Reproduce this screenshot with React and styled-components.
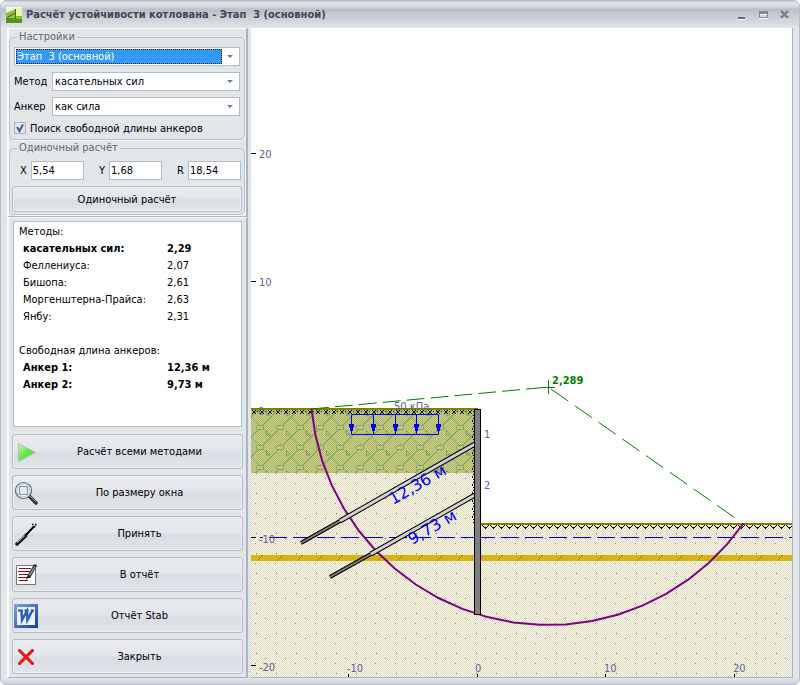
import React, { useState } from 'react'
import styled, { createGlobalStyle } from 'styled-components'

const GlobalStyle = createGlobalStyle`
  * {
    box-sizing: border-box;
  }

  body {
    margin: 0;
    background: #fff;
    color: #000;
    font-family: 'DejaVu Sans Condensed', 'DejaVu Sans', sans-serif;
    font-size: 11px;
    line-height: 17px;
  }

  button, input, select {
    font: inherit;
    color: inherit;
  }
`

const Window = styled.div`
  display: flex;
  flex-direction: column;
  min-height: 100vh;
  border: 1px solid #b6bdc9;
  border-radius: 6px;
  background: #e2e6e9;
  overflow: hidden;
`

const TitleBar = styled.header`
  display: flex;
  align-items: center;
  height: 27px;
  padding: 0 6px 0 5px;
  background: linear-gradient(#c4cad2 0, #e3e5e8 2px, #cdd0d6 7px, #b9bdc7 8px, #ccd0d6 17px, #e2e6e9 27px);
`

const Title = styled.h1`
  flex: 1;
  margin: 0 0 0 4px;
  color: #3f4858;
  font-size: 11px;
  font-weight: 700;
  white-space: nowrap;
`

const Controls = styled.div`
  display: flex;
  gap: 8px;
`

const ControlButton = styled.button`
  display: flex;
  width: 14px;
  height: 14px;
  padding: 0;
  border: 0;
  background: none;
`

const Body = styled.div`
  display: flex;
  flex: 1;
  padding: 0 6px 0 6px;
`

const Sidebar = styled.aside`
  display: flex;
  flex-direction: column;
  flex: 0 0 241px;
`

const Panel = styled.section`
  display: flex;
  flex-direction: column;
  flex: ${({ $grow }) => ($grow ? 1 : 'none')};
  border: solid;
  border-width: 1px 2px 1px 2px;
  border-color: #fafbfb #a9b5bf #a9b5bf #fafbfb;
  padding: ${({ $grow }) => ($grow ? '3px' : '0 1px 1px 0')};
`

const Group = styled.fieldset`
  display: flex;
  flex-direction: column;
  gap: 6px;
  min-width: 0;
  margin: 0;
  padding: ${({ $tight }) => ($tight ? '5px 2px 2px 2px' : '2px 2px 5px 2px')};
  border: 1px solid #b9c1c9;
  border-radius: 5px;
  box-shadow: 1px 1px 0 #f6f7f8;
`

const Legend = styled.legend`
  margin-left: 5px;
  padding: 0 2px;
  color: #5b6a78;
  line-height: 16px;
`

const Field = styled.div`
  display: flex;
  align-items: center;
  padding: 0 2px;

  label {
    flex: 0 0 38px;
  }
`

const SelectBox = styled.div`
  display: flex;
  flex: 1;
  align-items: center;
  height: 19px;
  padding: 1px;
  border: 1px solid #b3bccb;
  background: #fff;
`

const Select = styled.select`
  flex: 1;
  min-width: 0;
  height: 15px;
  padding: 0 1px;
  border: 0;
  appearance: none;
  line-height: 15px;
  background: ${({ $active }) => ($active ? '#3399ff' : '#fff')};
  color: ${({ $active }) => ($active ? '#fff' : '#000')};
  outline: ${({ $active }) => ($active ? '1px dotted #1c1c1c' : 'none')};
  outline-offset: -1px;
`

const CheckLabel = styled.label`
  display: flex;
  align-items: center;
  gap: 4px;
  height: 12px;
  padding: 0 2px;

  input {
    appearance: none;
    width: 12px;
    height: 12px;
    margin: 0;
    border: 1px solid #a3b4cc;
    background: #dfe8f1;
  }
`

const CheckMark = styled.svg`
  margin-left: -16px;
  pointer-events: none;
`

const Coords = styled.div`
  display: flex;
  justify-content: space-between;
  padding: 0 1px 0 8px;

  label {
    display: flex;
    align-items: center;
    gap: 4px;
  }

  input {
    width: 53px;
    height: 19px;
    padding: 0 1px;
    border: 1px solid #b3bccb;
    background: #fff;
  }
`

const Button = styled.button`
  display: flex;
  align-items: center;
  width: 100%;
  height: ${({ $small }) => ($small ? '26px' : '35px')};
  padding: 0 1px;
  border: 1px solid #b5bcc6;
  border-radius: 3px;
  background: linear-gradient(#e9ebef, #e3e6eb 45%, #d9dde4 55%, #e1e4e9);
  box-shadow: inset 0 0 0 1px #eceef1;

  span {
    flex: 1;
    text-align: center;
  }
`

const Output = styled.div`
  flex: 1;
  margin: 0 1px 3px 1px;
  padding: 1px 5px 0 5px;
  border: 1px solid #b3bccb;
  background: #fff;
`

const Results = styled.table`
  margin-bottom: 17px;
  border-collapse: collapse;
  table-layout: fixed;

  caption {
    text-align: left;
    white-space: nowrap;
  }

  th, td {
    padding: 0 0 0 4px;
    height: 17px;
    text-align: left;
    font-weight: 400;
  }

  th {
    width: 144px;
  }
`

const ResultRow = styled.tr`
  && > * {
    font-weight: ${({ $bold }) => ($bold ? 700 : 400)};
  }
`

const Actions = styled.div`
  display: flex;
  flex-direction: column;
  gap: 6px;
  margin-top: 4px;
`

const Plot = styled.main`
  flex: 1;
  min-width: 0;
  margin-left: 3px;
  border-right: 1px solid #a9b5bf;
  border-bottom: 1px solid #a9b5bf;
  background: #fff;

  svg {
    display: block;
    width: 100%;
    height: 100%;
  }

  text {
    font-size: 11px;
    fill: #5a6396;
  }
`

const RodLabel = styled.text`
  && {
    fill: #00f;
    font-family: 'DejaVu Sans', sans-serif;
    font-size: 16px;
  }
`

const CenterLabel = styled.text`
  && {
    fill: #008000;
    font-weight: 700;
  }
`

const Footer = styled.footer`
  height: 6px;
  background: linear-gradient(#e2e6e9, #ccd2dc);
`

const Arrow = () => (
  <svg width="16" height="15" viewBox="0 0 16 15" aria-hidden="true">
    <path d="M5 6h6L8 9z" fill="#707c8a" />
  </svg>
)

const AppIcon = () => (
  <svg width="16" height="16" viewBox="0 0 16 16" aria-hidden="true">
    <path d="M0 0h16v10H0z" fill="#f2f6ea" />
    <path d="M0 6l10-4v7h6v7H0z" fill="#8dc63a" />
    <path d="M0 11h16v5H0z" fill="#5a9417" />
    <path d="M10 1h6v8h-6z" fill="#e3f5a5" />
    <path d="M9.500 2v9M1 10.500l9-5" stroke="#4c5a3e" fill="none" />
    <path d="M10 9h6v3h-6z" fill="#86bb34" />
  </svg>
)

const PlayIcon = () => (
  <svg width="24" height="24" viewBox="0 0 24 24" aria-hidden="true">
    <defs>
      <linearGradient id="play" x1="0" y1="0" x2="1" y2="1">
        <stop offset="0" stopColor="#c4f9b4" />
        <stop offset=".5" stopColor="#62e83c" />
        <stop offset="1" stopColor="#58dc34" />
      </linearGradient>
    </defs>
    <path d="M4.500 3.500v18l17-9z" fill="url(#play)" stroke="#b4bdb4" />
  </svg>
)

const ZoomIcon = () => (
  <svg width="24" height="24" viewBox="0 0 24 24" aria-hidden="true">
    <path d="M15 15l7 7" stroke="#333" strokeWidth="3.500" strokeLinecap="round" />
    <path d="M16 15l6 6" stroke="#999" strokeWidth="1" />
    <circle cx="9.500" cy="9.500" r="8" fill="#f4f9fc" stroke="#59666b" strokeWidth="1.200" />
    <circle cx="9.500" cy="9.500" r="6.500" fill="none" stroke="#c3d4dc" strokeWidth="1.500" />
    <rect x="5.500" y="5.500" width="8" height="8" rx="1" fill="#e8eff3" stroke="#87959c" strokeWidth="1.200" />
  </svg>
)

const PenIcon = () => (
  <svg width="24" height="24" viewBox="0 0 24 24" aria-hidden="true">
    <path d="M3 22L12.500 13" stroke="#1b1b1b" strokeWidth="3.500" strokeLinecap="round" />
    <path d="M3 20.500l7.500-7" stroke="#a8a8a8" strokeWidth="1.500" />
    <path d="M12 13l8-8.500" stroke="#000" strokeWidth="2" />
    <path d="M18 2.500h1.500M21 2.500h1.500M20 4.500h1.500" stroke="#000" strokeWidth="1.500" />
    <path d="M13 14.500l8-8.500" stroke="#fff" strokeWidth="1" />
  </svg>
)

const ReportIcon = () => (
  <svg width="24" height="24" viewBox="0 0 24 24" aria-hidden="true">
    <path d="M2.500 2.500h19v19h-19z" fill="#fff" stroke="#777" />
    <path d="M5 5.500h12M4 8.500h12M5 11.500h9M4 14.500h9M5 17.500h9" stroke="#8b0f1d" />
    <path d="M15 13.500l6-10.500" stroke="#222" strokeWidth="3.500" strokeLinecap="round" />
    <path d="M15.500 12.500l5.500-9" stroke="#8d9895" strokeWidth="1.500" />
    <path d="M11.500 16.500l5-2.500-3-1.500z" fill="#333" />
  </svg>
)

const WordIcon = () => (
  <svg width="24" height="24" viewBox="0 0 24 24" aria-hidden="true">
    <defs>
      <linearGradient id="word" x1="0" y1="0" x2="1" y2="1">
        <stop offset="0" stopColor="#7ba5ee" />
        <stop offset="1" stopColor="#173b94" />
      </linearGradient>
    </defs>
    <rect width="24" height="24" fill="url(#word)" />
    <rect x="3" y="3" width="18" height="18" fill="#eef4fe" />
    <path d="M4 6.500h5M10.500 6.500h4M17 6.500h3" stroke="#1e489f" strokeWidth="2" />
    <path d="M7.500 6l.5 10L13 7l.5 9L18.500 6" fill="none" stroke="#2f60bd" strokeWidth="2.500" />
  </svg>
)

const CloseIcon = () => (
  <svg width="24" height="24" viewBox="0 0 24 24" aria-hidden="true">
    <path d="M5.500 5.500l13 13M18.500 5.500l-13 13" stroke="#c90808" strokeWidth="3" strokeLinecap="round" />
    <path d="M5.500 5.500l13 13M18.500 5.500l-13 13" stroke="#fa1414" strokeWidth="2" strokeLinecap="round" />
  </svg>
)

const methods = [
  ['касательных сил:', '2,29', true],
  ['Феллениуса:', '2,07'],
  ['Бишопа:', '2,61'],
  ['Моргенштерна-Прайса:', '2,63'],
  ['Янбу:', '2,31'],
]

const anchors = [
  ['Анкер 1:', '12,36 м', true],
  ['Анкер 2:', '9,73 м', true],
]

const actions = [
  ['Расчёт всеми методами', PlayIcon],
  ['По размеру окна', ZoomIcon],
  ['Принять', PenIcon],
  ['В отчёт', ReportIcon],
  ['Отчёт Stab', WordIcon],
  ['Закрыть', CloseIcon],
]

/* slip circle, walked from the ground surface to the pit floor */
const circle = { x: 548.5, y: 387, r: 238, start: 174.7, end: 35, steps: 22 }

const slipLine = Array.from({ length: circle.steps + 1 }, (_, i) => {
  const deg = circle.start + ((circle.end - circle.start) * i) / circle.steps
  const a = (deg * Math.PI) / 180
  return `${(circle.x + circle.r * Math.cos(a)).toFixed(1)},${(circle.y + circle.r * Math.sin(a)).toFixed(1)}`
}).join(' ')

const ResultTable = ({ caption, rows }) => (
  <Results>
    <caption>{caption}</caption>
    <tbody>
      {rows.map(([name, value, bold]) => (
        <ResultRow key={name} $bold={bold}>
          <th scope="row">{name}</th>
          <td>{value}</td>
        </ResultRow>
      ))}
    </tbody>
  </Results>
)

const Dropdown = ({ id, label, value, active }) => (
  <Field>
    {label && <label htmlFor={id}>{label}</label>}
    <SelectBox>
      <Select id={id} $active={active} aria-label={label ? undefined : 'Этап'}>
        <option>{value}</option>
      </Select>
      <Arrow />
    </SelectBox>
  </Field>
)

/* anchor rod: light free length first, dark fixed part at the far end */
const Rod = ({ from, mid, to }) => (
  <g>
    <path d={`M${from}L${mid}`} stroke="#000" strokeWidth="5" />
    <path d={`M${mid}L${to}`} stroke="#000" strokeWidth="4" />
    <path d={`M${from}L${mid}`} stroke="#d0d0d0" strokeWidth="3" />
    <path d={`M${mid}L${to}`} stroke="#808080" strokeWidth="2" />
  </g>
)

const Section = () => (
  <svg viewBox="251 28 541 649" preserveAspectRatio="xMidYMid meet" role="img" aria-label="Разрез котлована">
    <defs>
      <pattern id="sandBase" width="2" height="2" patternUnits="userSpaceOnUse">
        <path d="M0 0h2v2H0z" fill="#faf8f2" />
        <path d="M0 0h1v1H0zM1 1h1v1H1z" fill="#dedab8" />
      </pattern>
      <pattern id="sandDots" x="251" y="540" width="20" height="20" patternUnits="userSpaceOnUse">
        <path d="M4 3h1v1H4zM5 13h1v1H5zM14 18h1v1h-1z" fill="#85857a" />
      </pattern>
      <pattern id="clayBase" width="2" height="2" patternUnits="userSpaceOnUse">
        <path d="M0 0h2v2H0z" fill="#cacc8a" />
        <path d="M0 0h1v1H0zM1 1h1v1H1z" fill="#b0b86a" />
      </pattern>
      <pattern id="clayMarks" x="251" y="417" width="40" height="20" patternUnits="userSpaceOnUse">
        <g fill="none" stroke="#78a45e">
          <path d="M0 20L20 0M20 20L40 0M0 0l20 20" />
          <rect x="5.500" y="8.500" width="7" height="4" rx="1" fill="#c4c486" />
          <rect x="25.500" y="8.500" width="7" height="4" rx="1" fill="#c4c486" />
          <path d="M15.500 13.500v5l4-1zM35.500 13.500v5l4-1z" />
        </g>
      </pattern>
      <pattern id="band" x="251" y="555" width="20" height="6" patternUnits="userSpaceOnUse">
        <path d="M0 0h20v6H0z" fill="#d9b40c" />
        <path d="M6 6l6-6" stroke="#a88a00" />
      </pattern>
      <pattern id="turf" x="252" y="410" width="8" height="4" patternUnits="userSpaceOnUse">
        <path d="M0 0h1v1H0zM3 0h1v1H3zM1 1h2v2H1zM0 3h1v1H0zM3 3h1v1H3zM5 1h1v1H5z" />
      </pattern>
      <pattern id="pitTurf" x="481" y="525" width="8" height="4" patternUnits="userSpaceOnUse">
        <path d="M1 0h1v1H1zM2 1h1v1H2zM3 2h3v1H3zM4 3h1v1H4zM6 1h1v1H6zM7 0h1v1H7z" />
      </pattern>
      <pattern id="wallTurf" x="471" y="410" width="3" height="8" patternUnits="userSpaceOnUse">
        <path d="M2 0h1v1H2zM1 2h1v2H1zM2 5h1v1H2z" />
      </pattern>
    </defs>

    <g shapeRendering="crispEdges">
      <path d="M251 473h223v50h318v154H251z" fill="url(#sandBase)" />
      <path d="M251 473h223v50h318v154H251z" fill="url(#sandDots)" />
      <path d="M251 410h223v63H251z" fill="url(#clayBase)" />
    </g>
    <path d="M251 410h223v63H251z" fill="url(#clayMarks)" />
    <path d="M251 555h541v6H251z" fill="url(#band)" />
    <path d="M260 537.500h214" stroke="#0000d0" strokeDasharray="18 6" strokeDashoffset="15" />
    <path d="M481 537.500h311" stroke="#0000d0" strokeDasharray="18 6" strokeDashoffset="4" />

    <g shapeRendering="crispEdges">
      <path d="M251 408h227v2H251zM481 523h311v2H481z" fill="#808000" />
      <path d="M251 410h223v4H251z" fill="url(#turf)" />
      <path d="M481 525h311v4H481z" fill="url(#pitTurf)" />
      <path d="M471 414h3v109h-3z" fill="url(#wallTurf)" />
    </g>

    <path d="M311 409L549 387" stroke="#008000" strokeDasharray="18 6" />
    <path d="M551 389L738 520" stroke="#008000" strokeDasharray="21 8" />
    <path d="M541 387.500h14M548.500 380v14" stroke="#008000" />

    <polyline points={slipLine} fill="none" stroke="#800080" strokeWidth="2" />

    <Rod from="475 444" mid="340 521" to="301 543" />
    <Rod from="475 495" mid="371 554" to="330 577" />
    <rect x="474.500" y="409.500" width="6" height="205" fill="#808080" stroke="#000" />

    <g stroke="#00f" fill="none">
      <path d="M351.500 414.500h87v20h-87zM373.500 414v20M395.500 414v20M416.500 414v20" />
      {[351, 373, 395, 416, 438].map(x => (
        <path key={x} d={`M${x - 2} 424h5v3l-1 1v3h-3v-3l-1-1z`} fill="#00f" stroke="none" />
      ))}
    </g>

    <path d="M251 153.500h5M251 281.500h5M251 537.500h5M251 665.500h5M348.500 674v3M477.500 674v3M605.500 674v3M734.500 674v3" stroke="#000" />

    <text x="259" y="158">20</text>
    <text x="259" y="286">10</text>
    <text x="258" y="415">0</text>
    <text x="259" y="543">-10</text>
    <text x="259" y="671">-20</text>
    <text x="347" y="672">-10</text>
    <text x="475" y="672">0</text>
    <text x="604" y="672">10</text>
    <text x="733" y="672">20</text>
    <text x="394" y="410">50 кПа</text>
    <text x="484" y="438">1</text>
    <text x="484" y="489">2</text>
    <CenterLabel x="552" y="384">2,289</CenterLabel>
    <RodLabel transform="translate(393 505) rotate(-30)">12,36 м</RodLabel>
    <RodLabel transform="translate(412 545) rotate(-30)">9,73 м</RodLabel>
  </svg>
)

const App = () => {
  const [search, setSearch] = useState(true)

  return (
    <Window>
      <GlobalStyle />
      <TitleBar>
        <AppIcon />
        <Title>Расчёт устойчивости котлована - Этап&nbsp; 3 (основной)</Title>
        <Controls>
          <ControlButton aria-label="Свернуть">
            <svg width="14" height="14">
              <path d="M3 9h7v2H3z" fill="#5f6b7a" />
              <path d="M3 11h7v1H3z" fill="#fff" />
            </svg>
          </ControlButton>
          <ControlButton aria-label="Развернуть">
            <svg width="14" height="14">
              <path d="M2.500 3.500h8v6h-8z" fill="#cfd4db" stroke="#7c8795" />
              <path d="M2 3h9v3H2z" fill="#7c8795" />
              <path d="M3 6h7v1H3zM2 10h9v1H2z" fill="#fff" />
            </svg>
          </ControlButton>
          <ControlButton aria-label="Закрыть окно">
            <svg width="14" height="14">
              <path d="M2 4l7 7M9 4l-7 7" stroke="#fff" strokeWidth="2" />
              <path d="M2 3l7 7M9 3l-7 7" stroke="#768292" strokeWidth="2.500" />
            </svg>
          </ControlButton>
        </Controls>
      </TitleBar>

      <Body>
        <Sidebar>
          <Panel>
            <Group>
              <Legend>Настройки</Legend>
              <Dropdown id="stage" value={'Этап\u00a0 3 (основной)'} active />
              <Dropdown id="method" label="Метод" value="касательных сил" />
              <Dropdown id="anchor" label="Анкер" value="как сила" />
              <CheckLabel>
                <input type="checkbox" checked={search} onChange={e => setSearch(e.target.checked)} />
                <CheckMark width="12" height="12" viewBox="0 0 12 12" aria-hidden="true">
                  {search && <path d="M3 5l2.500 4L9 2.500" fill="none" stroke="#4a5b78" strokeWidth="2" />}
                </CheckMark>
                Поиск свободной длины анкеров
              </CheckLabel>
            </Group>
            <Group $tight>
              <Legend>Одиночный расчёт</Legend>
              <Coords>
                <label>X <input defaultValue="5,54" /></label>
                <label>Y <input defaultValue="1,68" /></label>
                <label>R <input defaultValue="18,54" /></label>
              </Coords>
              <Button type="button" $small><span>Одиночный расчёт</span></Button>
            </Group>
          </Panel>
          <Panel $grow>
            <Output>
              <ResultTable caption="Методы:" rows={methods} />
              <ResultTable caption="Свободная длина анкеров:" rows={anchors} />
            </Output>
            <Actions>
              {actions.map(([text, Icon]) => (
                <Button type="button" key={text}>
                  <Icon />
                  <span>{text}</span>
                </Button>
              ))}
            </Actions>
          </Panel>
        </Sidebar>
        <Plot>
          <Section />
        </Plot>
      </Body>
      <Footer />
    </Window>
  )
}

export default App
